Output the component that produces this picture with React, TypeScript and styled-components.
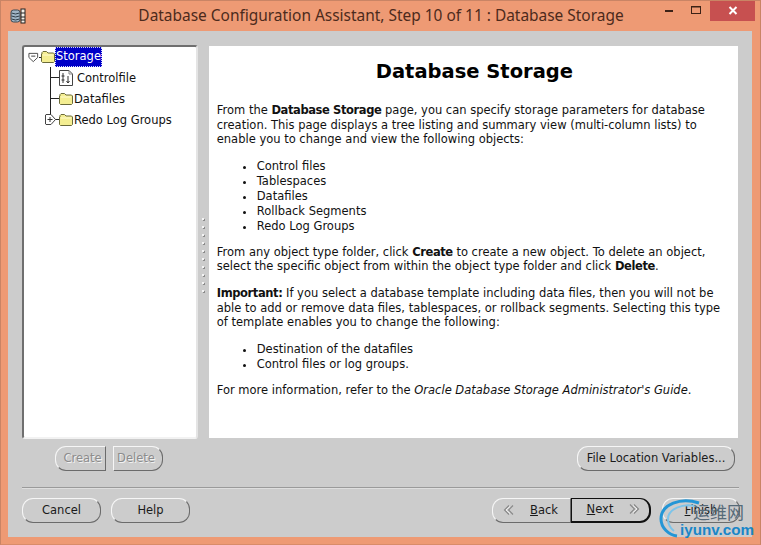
import React from "react";
import styled, { createGlobalStyle } from "styled-components";

const GlobalStyle = createGlobalStyle`
  html, body { margin: 0; padding: 0; background: #ee9a74; }
  body { font-family: "DejaVu Sans", sans-serif; font-size: 11.5px; }
`;

const Frame = styled.div`
  width: 761px;
  height: 545px;
  box-sizing: border-box;
  background: #ee9a74;
  border: 1px solid #c98465;
  border-bottom-color: #d98c69;
  padding: 0 8px 7px 7px;
  display: flex;
  flex-direction: column;
  overflow: hidden;
  position: relative;
`;

const TitleBar = styled.div`
  height: 30px;
  flex: none;
  position: relative;
  display: flex;
  align-items: center;
  justify-content: center;
`;

const TitleText = styled.div`
  font-family: "Noto Sans", sans-serif;
  font-size: 15.45px;
  color: #4c2a1c;
  margin: -2px 0 0 2px;
`;

const AppIcon = styled.svg`
  position: absolute;
  left: 2px;
  top: 7px;
`;

const WindowControls = styled.div`
  position: absolute;
  right: -3px;
  top: -1px;
  display: flex;
  align-items: flex-start;
`;

const ControlButton = styled.div<{ $close?: boolean }>`
  width: ${(p) => (p.$close ? "45px" : "27px")};
  height: 21px;
  background: ${(p) => (p.$close ? "#c75050" : "transparent")};
  display: flex;
  align-items: center;
  justify-content: center;
`;

const Dialog = styled.div`
  flex: 1;
  background: #cccccc;
  padding: 14px 14px 0 14px;
  display: flex;
  flex-direction: column;
`;

const MainRow = styled.div`
  display: flex;
  height: 394px;
  flex: none;
`;

const TreePane = styled.div`
  width: 176px;
  box-sizing: border-box;
  background: #fff;
  border: 2px solid;
  border-color: #6f6f6f #e4e4e4 #f2f2f2 #6f6f6f;
  border-radius: 3px;
  padding: 0 0 0 4px;
  color: #111;
  font-size: 11.5px;
`;

const TreeRow = styled.div<{ $indent: number; $h?: number }>`
  height: ${(p) => p.$h ?? 21}px;
  display: flex;
  align-items: center;
  padding-left: ${(p) => p.$indent}px;
  position: relative;
`;

const TreeChildren = styled.div`
  position: relative;
  &::before {
    content: "";
    position: absolute;
    left: 22px;
    top: 0;
    height: 52px;
    width: 1px;
    background: #222;
  }
`;

const Branch = styled.span<{ $w?: number }>`
  width: ${(p) => p.$w ?? 9}px;
  height: 1px;
  background: #222;
  flex: none;
`;

const Handle = styled.svg<{ $left: number }>`
  position: absolute;
  left: ${(p) => p.$left}px;
  top: 5px;
`;

const TreeLabel = styled.span<{ $gap?: number }>`
  margin-left: ${(p) => p.$gap ?? 0}px;
  white-space: nowrap;
`;

const SelectedLabel = styled.span`
  background: #0000c8;
  color: #fff;
  outline: 1px dotted #d8d8ff;
  outline-offset: -1px;
  padding: 2px 1px 3px 1px;
  line-height: 15px;
`;

const Splitter = styled.div`
  width: 11px;
  flex: none;
  display: flex;
  flex-direction: column;
  justify-content: center;
  align-items: center;
  gap: 6px;
  padding-top: 26px;
`;

const GripDot = styled.span`
  width: 2px;
  height: 2px;
  background: #f4f4f4;
  box-shadow: 1px 1px 0 #8a8a8a;
`;

const HelpPane = styled.div`
  width: 530px;
  box-sizing: border-box;
  background: #fff;
  margin: 1px 0;
  padding: 12px 16px 0 8px;
  color: #111;
  line-height: 14.6px;
  b {
    letter-spacing: -0.4px;
  }
`;

const HelpTitle = styled.h1`
  margin: 0 0 17px 0;
  text-align: center;
  font-family: "DejaVu Sans", sans-serif;
  font-size: 19.5px;
  line-height: 28px;
  font-weight: bold;
  color: #000;
  padding-left: 10px;
`;

const Para = styled.p`
  margin: 0 0 12px 0;
`;

const BulletList = styled.ul`
  margin: 12px 0 11px 0;
  padding: 0 0 0 40px;
  list-style: none;
`;

const BulletItem = styled.li`
  height: 15px;
  line-height: 15px;
  position: relative;
  &::before {
    content: "";
    position: absolute;
    left: -14px;
    top: 7px;
    width: 3px;
    height: 3px;
    border-radius: 50%;
    background: #111;
  }
`;

const ActionRow = styled.div`
  display: flex;
  justify-content: space-between;
  height: 25px;
  margin-top: 7px;
  padding: 0 3px 0 33px;
`;

const ButtonGroup = styled.div<{ $gap?: number }>`
  display: flex;
  gap: ${(p) => p.$gap ?? 0}px;
`;

const Separator = styled.div`
  height: 1px;
  background: #9a9a9a;
  margin: 16px -1px 0 0;
  box-shadow: 0 1px 0 #dedede;
`;

const FooterRow = styled.div`
  display: flex;
  justify-content: space-between;
  margin: 10px -2px 0 0;
`;

type Shape = "full" | "left" | "right";

const radii: Record<Shape, string> = {
  full: "11px",
  left: "11px 0 0 11px",
  right: "0 11px 11px 0",
};

const PillButton = styled.div<{
  $w: number;
  $shape?: Shape;
  $off?: boolean;
  $focus?: boolean;
  $after?: number;
  $shift?: number;
}>`
  width: ${(p) => p.$w}px;
  height: 25px;
  box-sizing: border-box;
  margin-left: ${(p) => p.$after ?? 0}px;
  padding: 0 ${(p) => Math.max(0, -(p.$shift ?? 0))}px 2px ${(p) => Math.max(0, p.$shift ?? 0)}px;
  display: flex;
  align-items: center;
  justify-content: center;
  gap: 15px;
  border: 1px solid;
  border-color: ${(p) => (p.$focus ? "#111" : "#f6f6f6 #6b6b6b #6b6b6b #f6f6f6")};
  border-width: ${(p) => (p.$focus ? "1px 2px 2px 1px" : "1px")};
  border-radius: ${(p) => radii[p.$shape ?? "full"]};
  color: ${(p) => (p.$off ? "#8c8c8c" : "#1a1a1a")};
  text-shadow: ${(p) => (p.$off ? "1px 1px 0 #f2f2f2" : "none")};
  background: #cccccc;
`;

const Mnemonic = styled.span`
  text-decoration: underline;
`;

const Watermark = styled.div`
  position: absolute;
  left: 656px;
  top: 497px;
  width: 104px;
  height: 46px;
`;

const WatermarkArc = styled.svg`
  position: absolute;
  left: 0;
  top: 0;
`;

const WatermarkCn = styled.span`
  position: absolute;
  left: 36px;
  top: 2px;
  font-family: "Noto Sans CJK SC", sans-serif;
  font-size: 17px;
  line-height: 24px;
  color: #566a78;
`;

const WatermarkUrl = styled.span`
  position: absolute;
  left: 23px;
  top: 22px;
  font-family: "Liberation Sans", sans-serif;
  font-weight: bold;
  font-size: 15.2px;
  line-height: 20px;
  color: #1a86c8;
`;

const Folder = () => (
  <svg width="14" height="12" viewBox="0 0 14 12" style={{ flex: "none" }}>
    <path d="M1 3 L1 1.5 L2 .5 H5.5 L7 2 H12.5 L13.5 3 V10.5 L12.5 11.5 H1.5 L.5 10.5 V3 Z" fill="#f4ee92" stroke="#6a6a3a" strokeWidth="1" />
    <path d="M2 4 H12" stroke="#fffbd0" strokeWidth="1" />
  </svg>
);

const FileIcon = () => (
  <svg width="14" height="16" viewBox="0 0 14 16" style={{ flex: "none" }}>
    <path d="M.5 .5 H10 L13.5 4 V15.5 H.5 Z" fill="#fff" stroke="#444" />
    <path d="M10 .5 V4 H13.5" fill="none" stroke="#888" />
    <path d="M4 3 V13 M9 6 V13 M2.5 6 H5.5 M2.5 10 H5.5 M7.5 11 L9 13 L10.5 11" fill="none" stroke="#333" />
  </svg>
);

const Grip = () => (
  <>
    {Array.from({ length: 10 }).map((_, i) => (
      <GripDot key={i} />
    ))}
  </>
);

const Chevrons = ({ flip }: { flip?: boolean }) => (
  <svg width="12" height="12" viewBox="0 0 12 12" style={flip ? { transform: "scaleX(-1)" } : undefined}>
    <path d="M6 1.5 L1.5 6 L6 10.5 M10 1.5 L5.5 6 L10 10.5" fill="none" stroke="#8a8a8a" strokeWidth="1.2" />
    <path d="M7 2.5 L3 6 L7 9.5" fill="none" stroke="#f2f2f2" strokeWidth="1" />
  </svg>
);

export default function App() {
  return (
    <>
      <GlobalStyle />
      <Frame>
        <TitleBar>
          <AppIcon width="16" height="16" viewBox="0 0 16 16">
            <rect x="1" y="2" width="9" height="12" rx="2.5" fill="#9fb4c4" stroke="#3c4a55" />
            <path d="M1.5 5 Q5.5 7 9.5 5 M1.5 8 Q5.5 10 9.5 8 M1.5 11 Q5.5 13 9.5 11" fill="none" stroke="#31404a" />
            <rect x="11" y="1" width="4" height="14" fill="#f5f0e8" stroke="#222" />
            <path d="M11 5 H15 M11 9 H15 M11 12 H15" stroke="#222" />
          </AppIcon>
          <TitleText>Database Configuration Assistant, Step 10 of 11 : Database Storage</TitleText>
          <WindowControls>
            <ControlButton>
              <svg width="10" height="4" viewBox="0 0 10 4"><rect y="1" width="8" height="2" fill="#3c2217" /></svg>
            </ControlButton>
            <ControlButton>
              <svg width="11" height="9" viewBox="0 0 11 9"><rect x=".5" y=".5" width="9" height="7" fill="none" stroke="#3c2217" /><path d="M0 1 H10" stroke="#3c2217" /></svg>
            </ControlButton>
            <ControlButton $close>
              <svg width="10" height="9" viewBox="0 0 10 9"><path d="M1.5 1 L8.5 8 M8.5 1 L1.5 8" stroke="#fff" strokeWidth="2" /></svg>
            </ControlButton>
          </WindowControls>
        </TitleBar>
        <Dialog>
          <MainRow>
            <TreePane>
              <TreeRow $indent={0} $h={20}>
                <svg width="11" height="11" viewBox="0 0 12 12" style={{ flex: "none" }}>
                  <path d="M1 1.5 H10.5 V6 L5.75 10.5 L1 6 Z" fill="#fff" stroke="#444" />
                  <path d="M3.5 4.5 H8" stroke="#333" />
                </svg>
                <Branch $w={2} />
                <Folder />
                <SelectedLabel>Storage</SelectedLabel>
              </TreeRow>
              <TreeChildren>
                <TreeRow $indent={22}>
                  <Branch />
                  <FileIcon />
                  <TreeLabel $gap={4}>Controlfile</TreeLabel>
                </TreeRow>
                <TreeRow $indent={22}>
                  <Branch />
                  <Folder />
                  <TreeLabel $gap={1}>Datafiles</TreeLabel>
                </TreeRow>
                <TreeRow $indent={22}>
                  <Branch />
                  <Folder />
                  <TreeLabel $gap={1}>Redo Log Groups</TreeLabel>
                  <Handle $left={17} width="11" height="11" viewBox="0 0 11 11">
                    <path d="M1 .5 H6 L10.5 5.5 L6 10.5 H1 L.5 10 V1 Z" fill="#fff" stroke="#444" />
                    <path d="M2.5 5.5 H7.5 M5 3 V8" stroke="#333" />
                  </Handle>
                </TreeRow>
              </TreeChildren>
            </TreePane>
            <Splitter>
              <Grip />
            </Splitter>
            <HelpPane>
              <HelpTitle>Database Storage</HelpTitle>
              <Para>
                From the <b>Database Storage</b> page, you can specify storage parameters for database creation. This page displays a tree listing and summary view (multi-column lists) to enable you to change and view the following objects:
              </Para>
              <BulletList>
                <BulletItem>Control files</BulletItem>
                <BulletItem>Tablespaces</BulletItem>
                <BulletItem>Datafiles</BulletItem>
                <BulletItem>Rollback Segments</BulletItem>
                <BulletItem>Redo Log Groups</BulletItem>
              </BulletList>
              <Para>
                From any object type folder, click <b>Create</b> to create a new object. To delete an object, select the specific object from within the object type folder and click <b>Delete</b>.
              </Para>
              <Para>
                <b>Important:</b> If you select a database template including data files, then you will not be able to add or remove data files, tablespaces, or rollback segments. Selecting this type of template enables you to change the following:
              </Para>
              <BulletList>
                <BulletItem>Destination of the datafiles</BulletItem>
                <BulletItem>Control files or log groups.</BulletItem>
              </BulletList>
              <Para>
                For more information, refer to the <i>Oracle Database Storage Administrator's Guide</i>.
              </Para>
            </HelpPane>
          </MainRow>
          <ActionRow>
            <ButtonGroup $gap={7}>
              <PillButton $w={51} $shape="left" $off $shift={4}>Create</PillButton>
              <PillButton $w={50} $shape="right" $off $shift={-4}>Delete</PillButton>
            </ButtonGroup>
            <PillButton $w={158}>File Location Variables...</PillButton>
          </ActionRow>
          <Separator />
          <FooterRow>
            <ButtonGroup $gap={10}>
              <PillButton $w={79}>Cancel</PillButton>
              <PillButton $w={79}>Help</PillButton>
            </ButtonGroup>
            <ButtonGroup>
              <PillButton $w={79} $shape="left" $shift={-2}>
                <Chevrons />
                <span><Mnemonic>B</Mnemonic>ack</span>
              </PillButton>
              <PillButton $w={80} $shape="right" $focus $shift={6}>
                <span><Mnemonic>N</Mnemonic>ext</span>
                <Chevrons flip />
              </PillButton>
              <PillButton $w={78} $after={11}>
                <span><Mnemonic>F</Mnemonic>inish</span>
              </PillButton>
            </ButtonGroup>
          </FooterRow>
        </Dialog>
        <Watermark>
          <WatermarkArc width="44" height="44" viewBox="0 0 44 44">
            <path d="M42 5 C24 -1 4 6 4 21 C4 30 12 37 20 38" fill="none" stroke="#2496d6" strokeWidth="3" />
            <path d="M38 8 C26 5 11 11 11 21 C11 26 13 30 17 33" fill="none" stroke="#7cc4ea" strokeWidth="2" />
          </WatermarkArc>
          <WatermarkCn>运维网</WatermarkCn>
          <WatermarkUrl>iyunv.com</WatermarkUrl>
        </Watermark>
      </Frame>
    </>
  );
}
